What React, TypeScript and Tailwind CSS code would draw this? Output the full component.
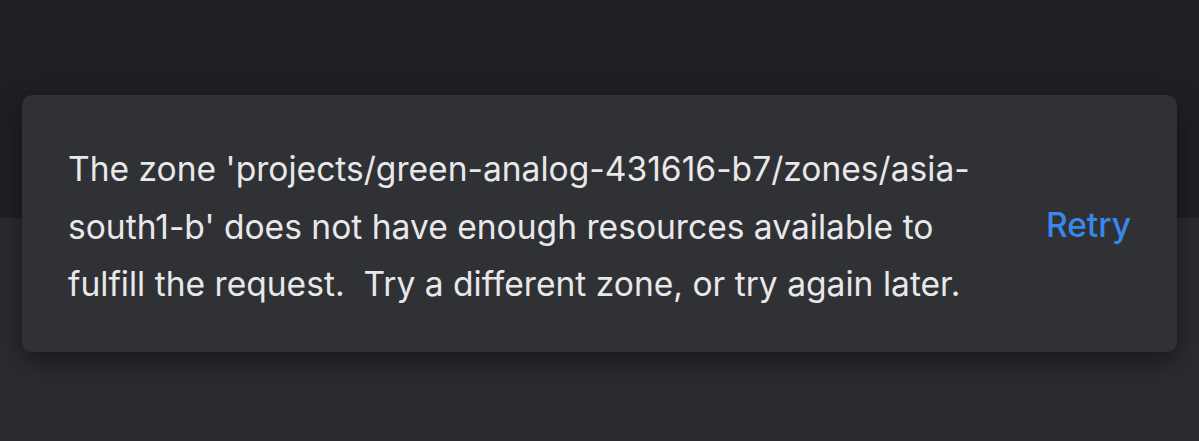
import React from 'react'

const App = () => {
  return (
    <div className="relative h-[441px] w-[1199px] overflow-hidden font-['Inter','Noto_Sans',sans-serif]">
      {/* Page behind the snackbar */}
      <div className="flex h-full flex-col">
        <div className="h-[218px] bg-[#1f2024]" />
        <div className="flex-1 bg-[#2b2c30]" />
      </div>

      {/* Snackbar */}
      <div className="absolute left-[22px] top-[95px] flex h-[257px] w-[1155px] items-center justify-between rounded-[10px] bg-[#303135] pl-[46px] pr-[46px] shadow-[0_10px_28px_rgba(0,0,0,0.45)]">
        <p className="w-[925px] pt-[6px] text-[33.6px] leading-[57.5px] text-[#e8e8ea]">
          The zone 'projects/green-analog-431616-b7/zones/asia-south1-b' does not have enough resources available to fulfill the request.&nbsp; Try a different zone, or try again later.
        </p>
        <button className="pt-[3px] text-[33.5px] font-medium text-[#3a87ea]">Retry</button>
      </div>
    </div>
  )
}

export default App
